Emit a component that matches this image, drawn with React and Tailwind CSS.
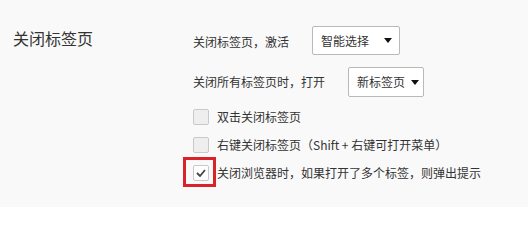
const Arrow = () => (
  <svg width="8" height="5" viewBox="0 0 8 5" className="shrink-0">
    <path d="M0 0h8L4 5z" fill="#111" />
  </svg>
);

const Select = ({ label, className }) => (
  <div
    className={`flex items-center justify-between rounded-[2px] border border-[#b9b9b9] bg-white pl-[8px] text-[12px] text-[#333] ${className}`}
  >
    <span>{label}</span>
    <Arrow />
  </div>
);

const Checkbox = ({ checked }) => (
  <div
    className={`flex h-[16px] w-[16px] shrink-0 items-center justify-center rounded-[2px] border border-[#c9c9c9] ${
      checked ? "bg-white" : "bg-[#eeeeee]"
    }`}
  >
    {checked && (
      <svg width="10" height="8" viewBox="0 0 10 8">
        <path
          d="M1 4l3 3 5-6"
          fill="none"
          stroke="#444"
          strokeWidth="1.8"
        />
      </svg>
    )}
  </div>
);

const CheckRow = ({ label, checked, highlight }) => (
  <div className="relative flex h-[16px] items-center gap-[8px]">
    <Checkbox checked={checked} />
    <span className="whitespace-nowrap text-[12px] text-[#333]">{label}</span>
    {highlight && (
      <div className="absolute left-[-10px] top-[-8px] h-[30px] w-[33px] border-[3px] border-[#d9222a]" />
    )}
  </div>
);

export default function App() {
  return (
    <div
      className="flex h-[207px] w-[528px] bg-[#f9f9f9] text-[#333]"
      style={{ fontFamily: '"Noto Sans CJK SC", "Noto Sans", sans-serif' }}
    >
      {/* section title */}
      <div className="w-[193px] shrink-0 pl-[13px] pt-[27px] text-[16px] leading-[22px]">
        关闭标签页
      </div>

      {/* options */}
      <div className="flex flex-col pt-[26px]">
        <div className="flex h-[29px] items-center">
          <span className="mt-[3px] text-[12px]">关闭标签页，激活</span>
          <Select label="智能选择" className="ml-[23px] h-[29px] w-[88px] pr-[7px]" />
        </div>

        <div className="mt-[12px] flex h-[30px] items-center">
          <span className="text-[12px]">关闭所有标签页时，打开</span>
          <Select label="新标签页" className="ml-[23px] h-[30px] w-[76px] pr-[4px]" />
        </div>

        <div className="mt-[12px] flex flex-col gap-[12px]">
          <CheckRow label="双击关闭标签页" />
          <CheckRow label="右键关闭标签页（Shift + 右键可打开菜单）" />
          <CheckRow
            label="关闭浏览器时，如果打开了多个标签，则弹出提示"
            checked
            highlight
          />
        </div>
      </div>
    </div>
  );
}
